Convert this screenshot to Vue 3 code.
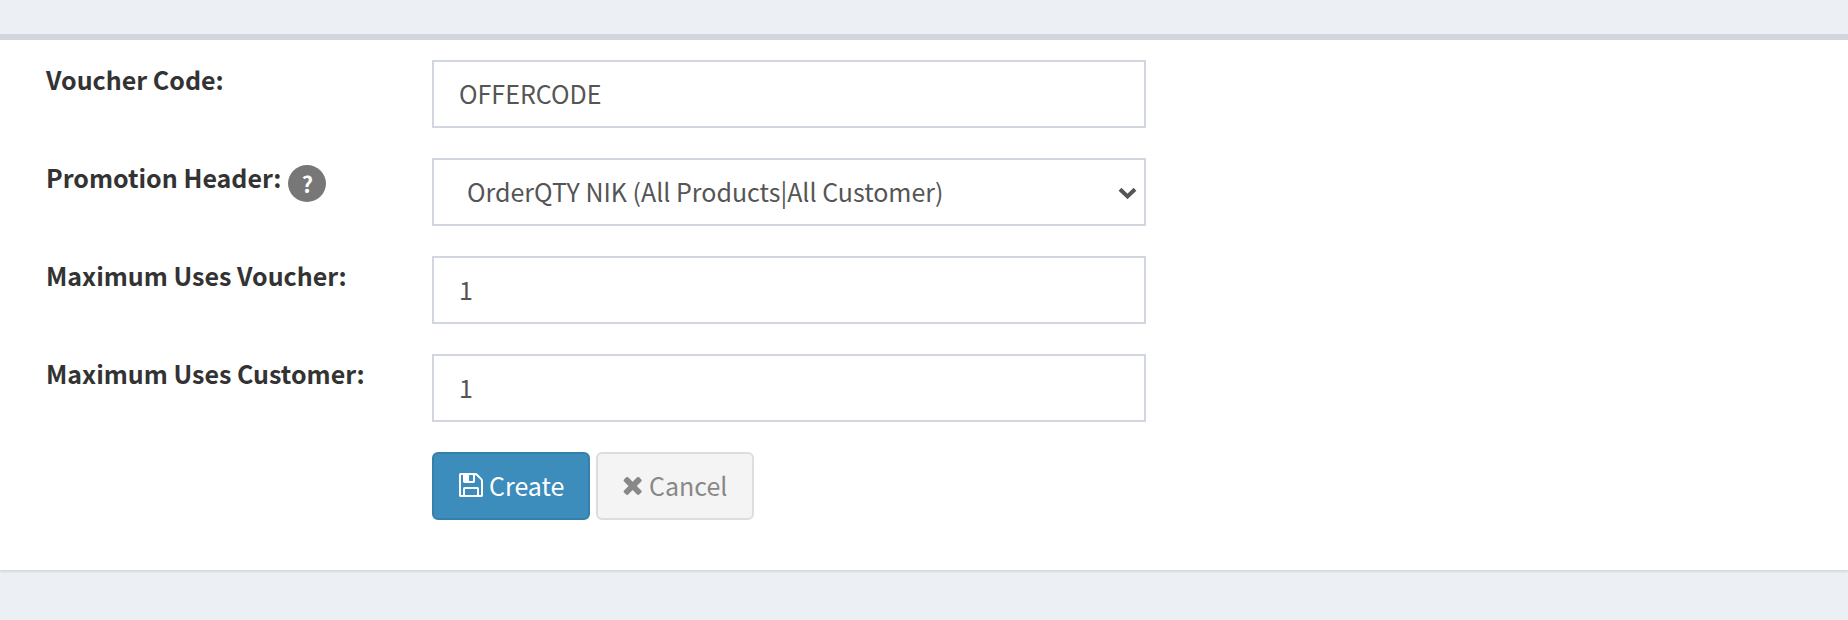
<script setup>
const rows = [
  { id: 'code', label: 'Voucher Code:', value: 'OFFERCODE', type: 'text' },
  { id: 'header', label: 'Promotion Header:', value: 'OrderQTY NIK (All Products|All Customer)', type: 'select', help: true },
  { id: 'voucher', label: 'Maximum Uses Voucher:', value: '1', type: 'number' },
  { id: 'customer', label: 'Maximum Uses Customer:', value: '1', type: 'number' },
]
</script>

<template>
  <div class="page">
    <form class="box" @submit.prevent>
      <template v-for="row in rows" :key="row.id">
        <label class="label" :for="row.id">
          <span>{{ row.label }}</span>
          <span v-if="row.help" class="help">?</span>
        </label>
        <div v-if="row.type === 'select'" class="select-wrap">
          <select :id="row.id" class="field select">
            <option>{{ row.value }}</option>
          </select>
          <svg class="chevron" viewBox="0 0 19 12" width="19" height="12" aria-hidden="true">
            <path d="M2 2.2 9.5 9.4 17 2.2" fill="none" stroke="#555" stroke-width="4" />
          </svg>
        </div>
        <input v-else :id="row.id" class="field" type="text" :value="row.value" />
      </template>
      <div class="actions">
        <button class="btn primary" type="submit">
          <svg class="save" viewBox="128 128 1536 1536" aria-hidden="true">
            <path fill="currentColor" d="M512 1536h768v-384h-768v384zm896 0h128v-896q0-14-10-38.5t-20-34.5l-281-281q-10-10-34-20t-39-10v416q0 40-28 68t-68 28h-576q-40 0-68-28t-28-68v-416h-128v1280h128v-416q0-40 28-68t68-28h832q40 0 68 28t28 68v416zm-384-928v-320q0-13-9.5-22.5t-22.5-9.5h-192q-13 0-22.5 9.5t-9.5 22.5v320q0 13 9.5 22.5t22.5 9.5h192q13 0 22.5-9.5t9.5-22.5zm640 32v928q0 40-28 68t-68 28h-1344q-40 0-68-28t-28-68v-1344q0-40 28-68t68-28h928q40 0 88 20t76 48l280 280q28 28 48 76t20 88z" />
          </svg>
          <span>Create</span>
        </button>
        <button class="btn default" type="button">
          <svg class="times" viewBox="282 238 1208 1316" aria-hidden="true">
            <path fill="currentColor" d="M1490 1322q0 40-28 68l-136 136q-28 28-68 28t-68-28l-294-294-294 294q-28 28-68 28t-68-28l-136-136q-28-28-28-68t28-68l294-294-294-294q-28-28-28-68t28-68l136-136q28-28 68-28t68 28l294 294 294-294q28-28 68-28t68 28l136 136q28 28 28 68t-28 68l-294 294 294 294q28 28 28 68z" />
          </svg>
          <span>Cancel</span>
        </button>
      </div>
    </form>
  </div>
</template>

<style>
html, body { margin: 0; background: #ecf0f5; }
</style>

<style scoped>
.page {
  box-sizing: border-box;
  height: 620px;
  padding-top: 34px;
  background: #ecf0f5;
  font-family: "Noto Sans CJK SC", "Noto Sans", sans-serif;
  font-size: 25px;
  line-height: 38px;
  color: #333;
  overflow: hidden;
}
.box {
  box-sizing: border-box;
  height: 536px;
  padding: 20px 0 0 46px;
  display: grid;
  grid-template-columns: 386px 714px;
  grid-auto-rows: 68px;
  row-gap: 30px;
  background: #fff;
  border-top: 6px solid #d2d6de;
  box-shadow: 0 2px 2px rgba(0, 0, 0, 0.1);
}
.label {
  display: flex;
  align-items: flex-start;
  gap: 7px;
  font-weight: 700;
}
.help {
  flex: none;
  width: 38px;
  height: 37px;
  margin-top: 7px;
  border-radius: 50%;
  background: #777;
  color: #fff;
  font-size: 22px;
  line-height: 36px;
  text-align: center;
}
.field {
  box-sizing: border-box;
  width: 100%;
  height: 68px;
  margin: 0;
  padding: 0 25px 2px;
  border: 2px solid #d2d6de;
  border-radius: 0;
  outline: none;
  background: #fff;
  color: #555;
  font: inherit;
  font-weight: 400;
}
.select-wrap { position: relative; }
.select {
  appearance: none;
  padding-left: 33px;
}
.chevron {
  position: absolute;
  top: 29px;
  right: 9px;
}
.actions {
  grid-column: 2;
  display: flex;
  gap: 6px;
}
.btn {
  box-sizing: border-box;
  display: flex;
  align-items: center;
  gap: 6px;
  width: 158px;
  height: 68px;
  padding: 0 0 2px 25px;
  border: 2px solid;
  border-radius: 6px;
  font: inherit;
}
.primary {
  background: #3c8dbc;
  border-color: #367fa9;
  color: #fff;
}
.default {
  gap: 7px;
  background: #f4f4f4;
  border-color: #ddd;
  color: #888;
}
.save { flex: none; width: 24px; height: 24px; }
.times { flex: none; width: 19px; height: 20px; }
</style>
